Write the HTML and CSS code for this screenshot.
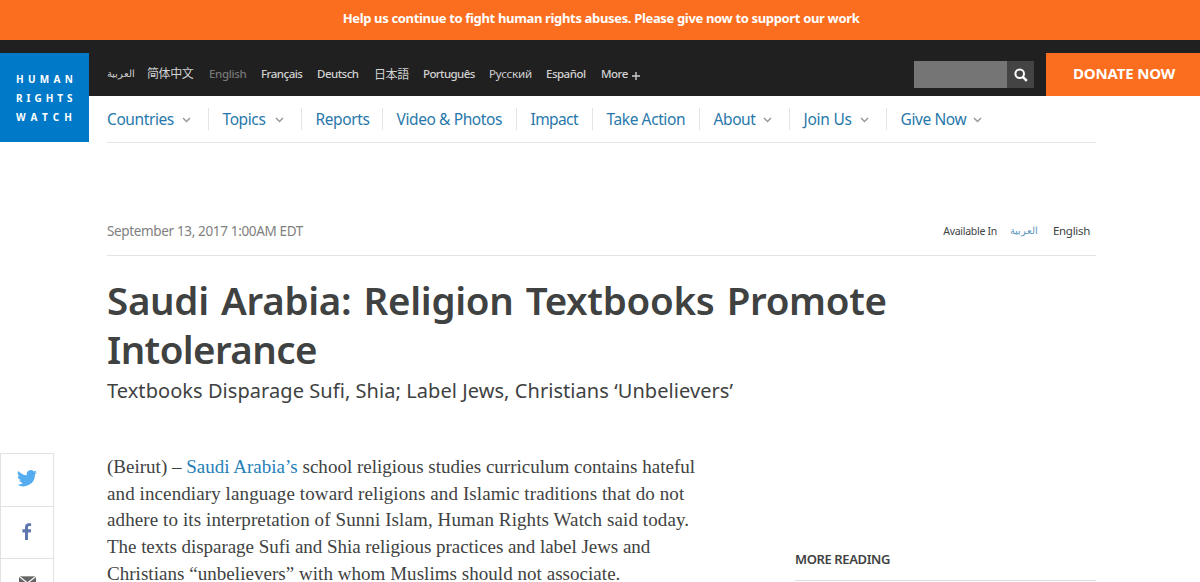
FILE: index.html
```html
<!DOCTYPE html>
<html lang="en">
<head>
<meta charset="utf-8">
<title>Saudi Arabia: Religion Textbooks Promote Intolerance | HRW</title>
<link rel="stylesheet" href="styles.css">
</head>
<body>
<div class="appeal">Help us continue to fight human rights abuses. Please give now to support our work</div>
<header class="header">
  <a class="logo"><span class="human">HUMAN</span><span class="rights">RIGHTS</span><span class="watch">WATCH</span></a>
  <div class="header-main">
    <div class="topbar">
      <ul class="langs">
        <li class="ar">العربية</li>
        <li class="cjk">简体中文</li>
        <li class="current">English</li>
        <li>Français</li>
        <li>Deutsch</li>
        <li class="cjk jp">日本語</li>
        <li class="pt">Português</li>
        <li class="ru">Русский</li>
        <li>Español</li>
        <li class="more">More <svg width="8" height="8" viewBox="0 0 8 8"><path d="M4 0v8M0 4h8" stroke="#ccc" stroke-width="1.4"/></svg></li>
      </ul>
      <div class="search">
        <span class="field"></span>
        <span class="button"><svg width="14" height="14" viewBox="0 0 14 14"><circle cx="5.7" cy="5.7" r="4.3" fill="none" stroke="#fff" stroke-width="2"/><path d="M8.8 8.8l4 4" stroke="#fff" stroke-width="2.5"/></svg></span>
      </div>
      <a class="donate">DONATE NOW</a>
    </div>
    <nav class="nav">
      <a>Countries <svg class="chev" viewBox="0 0 9 6"><path d="M1 1l3.5 3.5L8 1"/></svg></a>
      <a>Topics <svg class="chev" viewBox="0 0 9 6"><path d="M1 1l3.5 3.5L8 1"/></svg></a>
      <a>Reports</a>
      <a>Video &amp; Photos</a>
      <a class="tight">Impact</a>
      <a>Take Action</a>
      <a>About <svg class="chev" viewBox="0 0 9 6"><path d="M1 1l3.5 3.5L8 1"/></svg></a>
      <a class="join">Join Us <svg class="chev" viewBox="0 0 9 6"><path d="M1 1l3.5 3.5L8 1"/></svg></a>
      <a>Give Now <svg class="chev" viewBox="0 0 9 6"><path d="M1 1l3.5 3.5L8 1"/></svg></a>
    </nav>
  </div>
</header>
<main class="page">
  <aside class="share">
    <a><svg width="20" height="17" viewBox="0 0 24 20" fill="#55acee"><path d="M24 2.4a10 10 0 0 1-2.8.8A5 5 0 0 0 23.3.4a10 10 0 0 1-3.1 1.2A4.9 4.9 0 0 0 11.8 6.1 14 14 0 0 1 1.7.9a4.9 4.9 0 0 0 1.5 6.6A4.9 4.9 0 0 1 1 6.9v.1a4.9 4.9 0 0 0 3.9 4.800 5 5 0 0 1-2.200.1 4.900 4.900 0 0 0 4.600 3.400A9.900 9.900 0 0 1 0 17.300 14 14 0 0 0 21.500 4.900 10 10 0 0 0 24 2.400z"/></svg></a>
    <a><svg width="10" height="17" viewBox="0 0 10 17" fill="#5f77ad"><path d="M3 17V9.400H.4V6.300H3V4.200C3 1.600 4.500.3 6.800.3c1.100 0 2 .1 2.300.1v2.700H7.500c-1.200 0-1.500.6-1.500 1.500v1.700h3.100l-.4 3.100H6V17z"/></svg></a>
    <a class="mail"><svg width="17" height="12" viewBox="0 0 18 12"><path fill="#666" d="M0 0h18v12H0z"/><path d="M0 0l9 7 9-7" fill="none" stroke="#fff" stroke-width="1.300"/></svg></a>
  </aside>
  <article class="article">
    <div class="meta">
      <time>September 13, 2017 1:00AM EDT</time>
      <div class="available"><span class="label">Available In</span><a class="ar">العربية</a><span class="here">English</span></div>
    </div>
    <h1><span>Saudi Arabia: Religion Textbooks Promote</span><br><span class="second">Intolerance</span></h1>
    <h2>Textbooks Disparage Sufi, Shia; Label Jews, Christians ‘Unbelievers’</h2>
    <div class="columns">
      <p class="body"><span class="snug">(Beirut) – <a>Saudi Arabia’s</a> school religious studies curriculum contains hateful</span><br><span class="loose">and incendiary language toward religions and Islamic traditions that do not</span><br><span class="loose">adhere to its interpretation of Sunni Islam, Human Rights Watch said today.</span><br><span class="snugger">The texts disparage Sufi and Shia religious practices and label Jews and</span><br>Christians “unbelievers” with whom Muslims should not associate.</p>
      <section class="related"><h3>MORE READING</h3></section>
    </div>
  </article>
</main>
</body>
</html>
```
FILE: styles.css
```css
* { box-sizing: border-box; }
body {
  margin: 0;
  height: 582px;
  overflow: hidden;
  background: #fff;
  color: #404242;
  font-family: "Noto Sans", "Noto Sans CJK SC", sans-serif;
  white-space: nowrap;
}
.appeal {
  height: 40px;
  line-height: 37px;
  background: #fb6e20;
  color: #fff;
  font-size: 13px;
  font-weight: 700;
  letter-spacing: -.34px;
  text-align: center;
  padding-left: 2px;
}
.header {
  display: grid;
  grid-template-columns: 89px 1fr;
  height: 103px;
  background: linear-gradient(#202020 56px, #fff 56px);
}
.logo {
  display: flex;
  flex-direction: column;
  margin-top: 13px;
  height: 89px;
  padding: 17px 0 0 16px;
  background: #0079c8;
  color: #fff;
  font-size: 10px;
  font-weight: 700;
  line-height: 19px;
}
.human { letter-spacing: 4.3px; }
.rights { letter-spacing: 4px; }
.watch { letter-spacing: 5.2px; }
.topbar {
  display: flex;
  height: 56px;
  padding: 13px 0 0 18px;
}
.langs {
  display: grid;
  grid-template-columns: 40px 62px 52px 56px 57px 49px 66px 57px 55px 60px;
  width: 554px;
  margin: 0;
  padding: 0;
  list-style: none;
  color: #d2d2d2;
  font-size: 11.5px;
  font-weight: 500;
  line-height: 41px;
  letter-spacing: -.5px;
}
.langs .current { color: #777; letter-spacing: -.35px; }
.langs .ar { font-size: 10px; letter-spacing: 0; }
.langs .cjk { letter-spacing: -.4px; font-weight: 400; font-size: 12px; }
.langs .jp { font-family: "Noto Sans CJK JP", sans-serif; }
.langs .ru { letter-spacing: -.15px; font-weight: 400; }
.langs .pt { letter-spacing: -.6px; }
.more svg { margin: 0 0 -2px 2px; }
.search {
  display: flex;
  flex: none;
  width: 120px;
  height: 27px;
  margin: 8px 12px 0 253px;
}
.field { width: 93px; background: #757575; }
.button {
  display: flex;
  flex: 1;
  align-items: center;
  justify-content: center;
  background: #444;
}
.donate {
  flex: 1;
  background: #fb6e20;
  color: #fff;
  font-size: 15px;
  font-weight: 700;
  line-height: 41px;
  letter-spacing: -.17px;
  padding-left: 27px;
}
.nav {
  display: grid;
  grid-template-columns: 102px 93px 81px 134px 76px 107px 90px 97px 100px;
  align-items: start;
  height: 47px;
  margin: 0 104px 0 18px;
  padding-top: 12px;
  border-bottom: 1px solid #e6e6e6;
}
.nav a {
  display: flex;
  align-items: center;
  height: 22px;
  padding-left: 13.5px;
  border-right: 1px solid #e4e4e4;
  color: #2878ab;
  font-size: 15.5px;
  line-height: 20px;
  letter-spacing: -.4px;
}
.nav a:first-child { padding-left: 0; }
.nav a:last-child { border: 0; }
.nav .tight { letter-spacing: -.6px; }
.nav .join { letter-spacing: -.25px; }
.chev {
  flex: none;
  width: 9px;
  height: 6px;
  margin: 2px 17px 0 auto;
  fill: none;
  stroke: #999;
  stroke-width: 1.5;
}
.nav a:last-child .chev { margin-right: 5px; }
.page {
  display: grid;
  grid-template-columns: 54px 989px;
  column-gap: 53px;
}
.share {
  margin-top: 310px;
  border: 1px solid #e2e2e2;
}
.share a {
  display: flex;
  align-items: center;
  justify-content: center;
  height: 52.5px;
  padding-bottom: 2px;
  border-bottom: 1px solid #e2e2e2;
}
.share .mail { height: 48px; border: 0; }
.meta {
  display: flex;
  justify-content: space-between;
  height: 113px;
  padding: 78px 6px 0 0;
  border-bottom: 1px solid #e4e4e4;
  line-height: 20px;
}
.meta time { color: #808080; font-size: 13.5px; letter-spacing: -.35px; }
.available { display: flex; }
.label { font-size: 10.5px; letter-spacing: -.28px; }
.available .ar { margin: 0 15px 0 13px; color: #5b95bd; font-size: 9.5px; }
.here { font-size: 11.5px; letter-spacing: -.3px; }
h1 {
  margin: 20px 0 0;
  font-size: 38.5px;
  font-weight: 600;
  line-height: 48.5px;
  letter-spacing: -.3px;
  word-spacing: 2.5px;
}
.second { letter-spacing: -.6px; }
h2 {
  margin: 6px 0 0;
  font-size: 20px;
  font-weight: 400;
  line-height: 24px;
  letter-spacing: .06px;
}
.columns {
  display: grid;
  grid-template-columns: 588px 301px;
  justify-content: space-between;
  height: 180px;
}
.body {
  margin: 51px 0 0;
  font: 19px/26.7px "Liberation Serif", serif;
  letter-spacing: .04px;
}
.snug { letter-spacing: .01px; }
.snugger { letter-spacing: -.04px; }
.loose { letter-spacing: .1px; }
.body a { color: #2480b8; }
.related { padding-top: 146px; }
h3 {
  width: 301px;
  height: 32px;
  margin: 0;
  font-size: 13px;
  font-weight: 600;
  line-height: 20px;
  letter-spacing: -.39px;
  border-bottom: 1px solid #ddd;
}
```
